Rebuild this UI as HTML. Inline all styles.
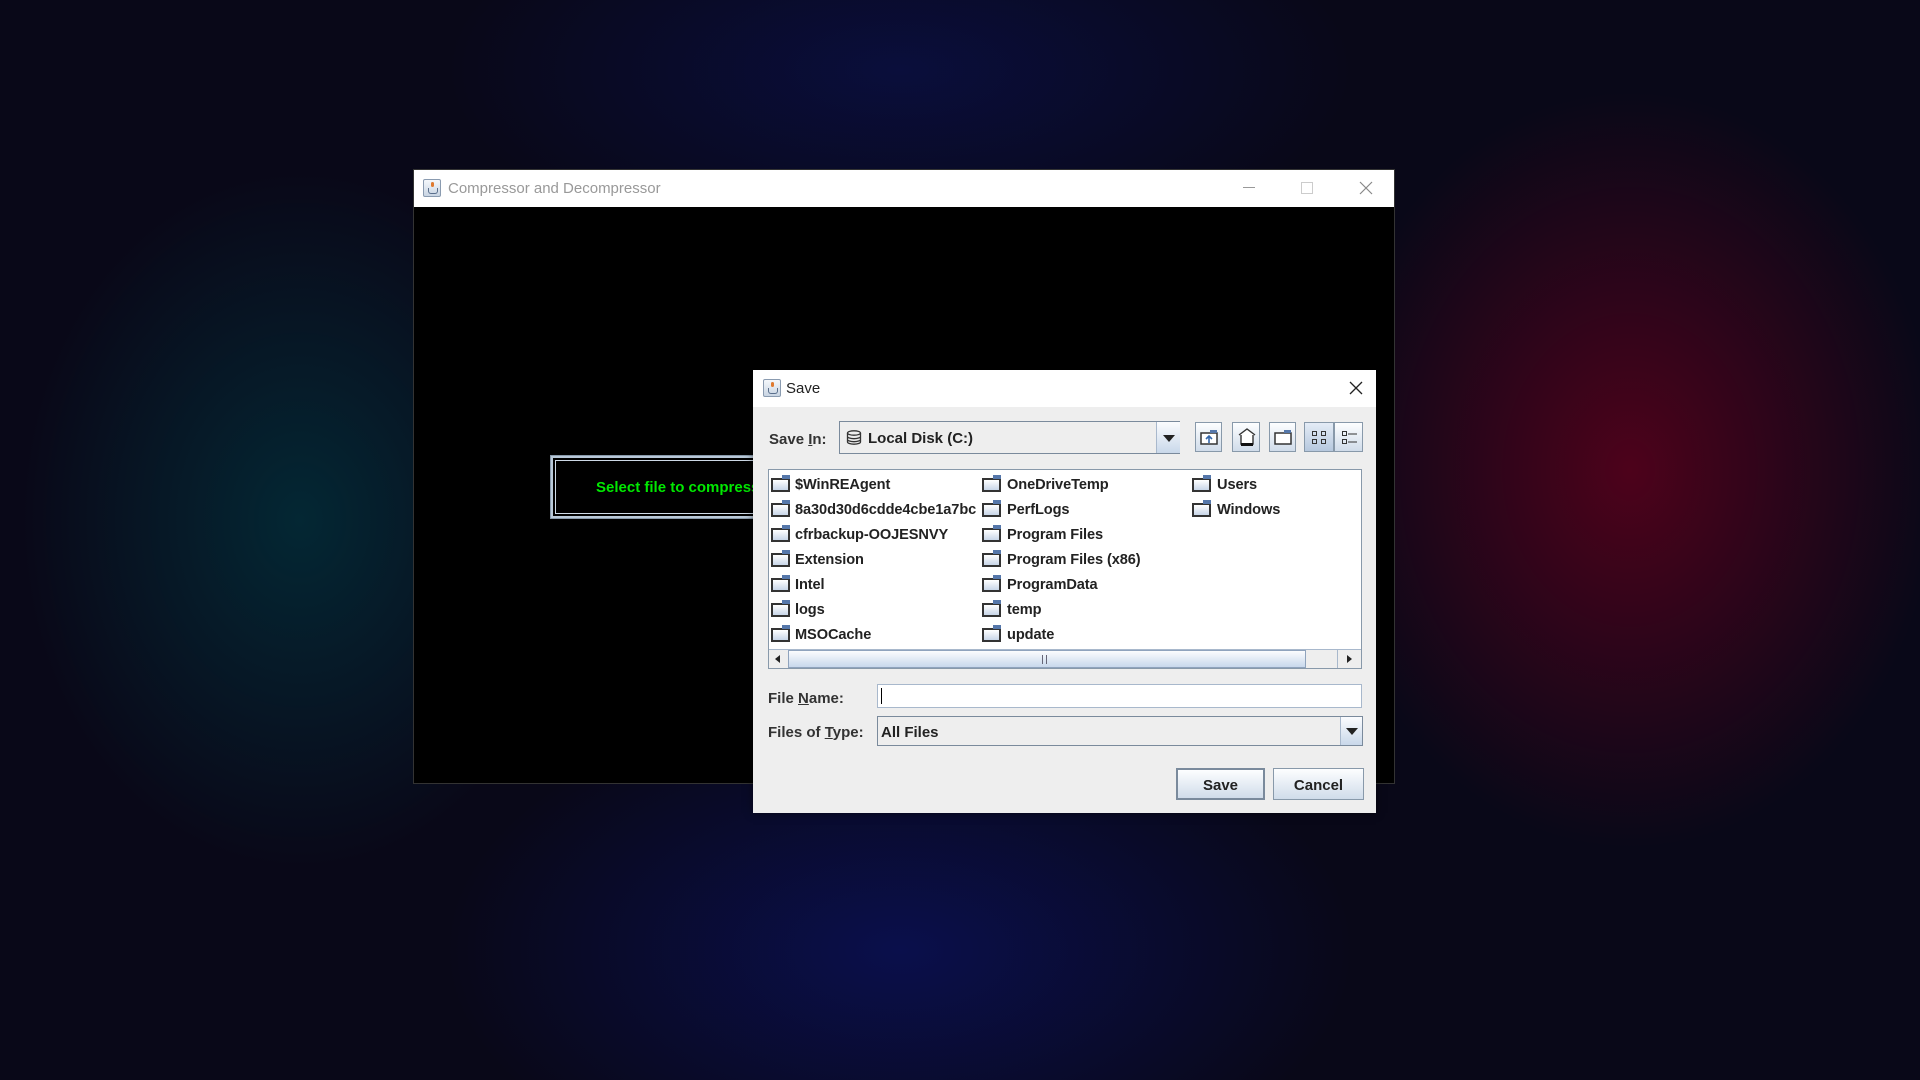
<!DOCTYPE html>
<html><head><meta charset="utf-8"><style>
*{margin:0;padding:0;box-sizing:border-box}
body{width:1920px;height:1080px;overflow:hidden;position:relative;font-family:"Liberation Sans",Arial,sans-serif;
background:
radial-gradient(ellipse 400px 500px at 300px 520px, rgba(0,60,70,0.6), transparent 70%),
radial-gradient(ellipse 440px 540px at 1630px 470px, rgba(100,0,28,0.75), transparent 70%),
radial-gradient(ellipse 650px 360px at 900px 950px, rgba(10,20,110,0.6), transparent 70%),
radial-gradient(ellipse 650px 280px at 900px 70px, rgba(10,20,95,0.5), transparent 70%),
#090818;}
.abs{position:absolute}
.win{left:413px;top:169px;width:982px;height:615px;background:#000;border:1px solid #333}
.tb{left:0;top:0;width:100%;height:37px;background:#fff}
.jicon{width:18px;height:18px;border:1px solid #8a9bb0;border-radius:2px;background:linear-gradient(#f4f7fb,#c9d5e3)}
.jicon:after{content:"";position:absolute;left:4px;top:8px;width:8px;height:5px;border:1px solid #5a6f8c;border-top:none;border-radius:0 0 3px 3px}
.jicon:before{content:"";position:absolute;left:7px;top:2px;width:3px;height:5px;background:#e07a30;border-radius:2px}
.dlg{left:753px;top:370px;width:623px;height:443px;background:#eeeeee;box-shadow:0 0 8px rgba(0,0,0,.5)}
.lbl{font-weight:bold;font-size:15px;color:#333}
.combo{border:1px solid #7a8a9c;background:#eeeeee}
.arrow{border-left:1px solid #a8b8cc;background:linear-gradient(#fbfcfe,#c9d8ea)}
.tri{position:absolute;left:50%;top:50%;margin:-3px 0 0 -6px;border-left:6px solid transparent;border-right:6px solid transparent;border-top:7px solid #222}
.btn{border:1px solid #8899aa;background:linear-gradient(#fdfeff,#d0dcea)}
.fold{position:absolute;width:19px;height:14px;border:2px solid #333;background:linear-gradient(#fff,#c8d6e8)}
.fold:after{content:"";position:absolute;right:-2px;top:-5px;width:8px;height:4px;background:#5577aa}
.item{position:absolute;font-weight:bold;font-size:14.6px;color:#222;height:20px;line-height:20px;white-space:nowrap;letter-spacing:-0.1px}
u{text-decoration:underline}
</style></head><body>

<div class="abs win">
  <div class="abs tb">
    <div class="abs jicon" style="left:9px;top:9px"></div>
    <div class="abs" style="left:34px;top:10px;font-size:15px;color:#999">Compressor and Decompressor</div>
    <div class="abs" style="left:829px;top:17px;width:12px;height:1px;background:#999"></div>
    <div class="abs" style="left:887px;top:12px;width:12px;height:12px;border:1px solid #ccc"></div>
    <svg class="abs" style="left:945px;top:11px" width="14" height="14"><path d="M1 1L13 13M13 1L1 13" stroke="#888" stroke-width="1.2"/></svg>
  </div>
  <div class="abs" style="left:137px;top:286px;width:260px;height:62px;border:2px solid #b8c8d8;outline:1px solid #8899aa">
    <div class="abs" style="left:2px;top:2px;right:-2px;bottom:2px;border:1px solid #cdd9e6"></div>
    <div class="abs" style="left:43px;top:21px;font-weight:bold;font-size:15px;color:#00e800;white-space:nowrap">Select file to compress</div>
  </div>
</div>

<div class="abs dlg">
  <div class="abs tb" style="height:37px">
    <div class="abs jicon" style="left:10px;top:9px"></div>
    <div class="abs" style="left:33px;top:10px;font-size:15px;color:#222">Save</div>
    <svg class="abs" style="left:596px;top:11px" width="14" height="14"><path d="M1 1L13 13M13 1L1 13" stroke="#222" stroke-width="1.3"/></svg>
  </div>
  <div class="abs lbl" style="left:16px;top:61px">Save <u>I</u>n:</div>
  <div class="abs combo" style="left:86px;top:51px;width:341px;height:33px">
    <svg class="abs" style="left:6px;top:8px" width="16" height="15"><g fill="none" stroke="#333" stroke-width="1.3"><ellipse cx="8" cy="3" rx="6.5" ry="2.2"/><path d="M1.5 3v9c0 1.2 3 2.2 6.5 2.2s6.5-1 6.5-2.2V3M1.5 6.5c0 1.2 3 2.2 6.5 2.2s6.5-1 6.5-2.2M1.5 9.5c0 1.2 3 2.2 6.5 2.2s6.5-1 6.5-2.2"/></g></svg>
    <div class="abs lbl" style="left:28px;top:8px;color:#222">Local Disk (C:)</div>
    <div class="abs arrow" style="left:316px;top:0;width:24px;height:31px"><div class="tri"></div></div>
  </div>
  <div class="abs btn" style="left:442px;top:52px;width:27px;height:30px">
    <svg class="abs" style="left:4px;top:6px" width="19" height="17"><rect x="1" y="4" width="16" height="11" fill="#fff" stroke="#333" stroke-width="1.5"/><rect x="10" y="1" width="7" height="3" fill="#5577aa"/><path d="M9 14V8M6 10l3-3 3 3" stroke="#3366aa" stroke-width="1.6" fill="none"/></svg>
  </div>
  <div class="abs btn" style="left:479px;top:52px;width:28px;height:30px">
    <svg class="abs" style="left:4px;top:4px" width="20" height="20"><path d="M2 8L10 2 18 8M4 8v9h12V8" fill="#fff" stroke="#333" stroke-width="1.4"/><rect x="4" y="16" width="12" height="3" fill="#111"/></svg>
  </div>
  <div class="abs btn" style="left:516px;top:52px;width:27px;height:30px">
    <svg class="abs" style="left:4px;top:6px" width="19" height="17"><rect x="1" y="4" width="16" height="11" fill="#fff" stroke="#333" stroke-width="1.5"/><rect x="10" y="1" width="7" height="3" fill="#5577aa"/></svg>
  </div>
  <div class="abs btn" style="left:551px;top:52px;width:30px;height:30px;background:linear-gradient(#e4ecf6,#b6c8de)">
    <svg class="abs" style="left:6px;top:7px" width="18" height="16"><g fill="none" stroke="#333"><rect x="1.5" y="1.5" width="4" height="4"/><rect x="10.5" y="1.5" width="4" height="4"/><rect x="1.5" y="9.5" width="4" height="4"/><rect x="10.5" y="9.5" width="4" height="4"/></g></svg>
  </div>
  <div class="abs btn" style="left:581px;top:52px;width:29px;height:30px">
    <svg class="abs" style="left:6px;top:7px" width="18" height="16"><g fill="none" stroke="#333"><rect x="1.5" y="1.5" width="4" height="4"/><rect x="1.5" y="9.5" width="4" height="4"/><path d="M7 4h9M7 12h9"/></g></svg>
  </div>

  <div class="abs" style="left:15px;top:99px;width:594px;height:200px;background:#fff;border:1px solid #8899aa">
    <div class="fold" style="left:2px;top:8px"></div><div class="item" style="left:26px;top:5px">$WinREAgent</div>
    <div class="fold" style="left:2px;top:33px"></div><div class="item" style="left:26px;top:30px">8a30d30d6cdde4cbe1a7bc</div>
    <div class="fold" style="left:2px;top:58px"></div><div class="item" style="left:26px;top:55px">cfrbackup-OOJESNVY</div>
    <div class="fold" style="left:2px;top:83px"></div><div class="item" style="left:26px;top:80px">Extension</div>
    <div class="fold" style="left:2px;top:108px"></div><div class="item" style="left:26px;top:105px">Intel</div>
    <div class="fold" style="left:2px;top:133px"></div><div class="item" style="left:26px;top:130px">logs</div>
    <div class="fold" style="left:2px;top:158px"></div><div class="item" style="left:26px;top:155px">MSOCache</div>

    <div class="abs" style="left:212px;top:0;width:22px;height:178px;background:#fff"></div>
    <div class="fold" style="left:213px;top:8px"></div><div class="item" style="left:238px;top:5px">OneDriveTemp</div>
    <div class="fold" style="left:213px;top:33px"></div><div class="item" style="left:238px;top:30px">PerfLogs</div>
    <div class="fold" style="left:213px;top:58px"></div><div class="item" style="left:238px;top:55px">Program Files</div>
    <div class="fold" style="left:213px;top:83px"></div><div class="item" style="left:238px;top:80px">Program Files (x86)</div>
    <div class="fold" style="left:213px;top:108px"></div><div class="item" style="left:238px;top:105px">ProgramData</div>
    <div class="fold" style="left:213px;top:133px"></div><div class="item" style="left:238px;top:130px">temp</div>
    <div class="fold" style="left:213px;top:158px"></div><div class="item" style="left:238px;top:155px">update</div>

    <div class="fold" style="left:423px;top:8px"></div><div class="item" style="left:448px;top:5px">Users</div>
    <div class="fold" style="left:423px;top:33px"></div><div class="item" style="left:448px;top:30px">Windows</div>

    <div class="abs" style="left:0;top:179px;width:592px;height:19px;background:#eeeeee;border-top:1px solid #a8b8cc">
      <div class="abs" style="left:6px;top:5px;border-top:4px solid transparent;border-bottom:4px solid transparent;border-right:5px solid #222"></div>
      <div class="abs" style="left:19px;top:0;width:518px;height:18px;border:1px solid #8fa3bd;background:linear-gradient(#fbfcfe,#c8d8ec)">
        <div class="abs" style="left:253px;top:4px;width:5px;height:9px;border-left:1px solid #667;border-right:1px solid #667"></div>
      </div>
      <div class="abs" style="left:568px;top:0;width:1px;height:18px;background:#a8b8cc"></div>
      <div class="abs" style="left:578px;top:5px;border-top:4px solid transparent;border-bottom:4px solid transparent;border-left:5px solid #222"></div>
    </div>
  </div>

  <div class="abs lbl" style="left:15px;top:320px">File <u>N</u>ame:</div>
  <div class="abs" style="left:124px;top:314px;width:485px;height:24px;background:#fff;border:1px solid #a8b8cc">
    <div class="abs" style="left:3px;top:3px;width:1px;height:16px;background:#000"></div>
  </div>
  <div class="abs lbl" style="left:15px;top:354px">Files of <u>T</u>ype:</div>
  <div class="abs combo" style="left:124px;top:346px;width:486px;height:30px">
    <div class="abs lbl" style="left:3px;top:7px;color:#222">All Files</div>
    <div class="abs arrow" style="left:462px;top:0;width:22px;height:28px"><div class="tri"></div></div>
  </div>

  <div class="abs btn" style="left:423px;top:398px;width:89px;height:32px;border:2px solid #7a8a9c">
    <div class="abs lbl" style="left:0;right:0;top:7px;text-align:center;color:#222">Save</div>
  </div>
  <div class="abs btn" style="left:520px;top:398px;width:91px;height:32px">
    <div class="abs lbl" style="left:0;right:0;top:8px;text-align:center;color:#222">Cancel</div>
  </div>
</div>
</body></html>
